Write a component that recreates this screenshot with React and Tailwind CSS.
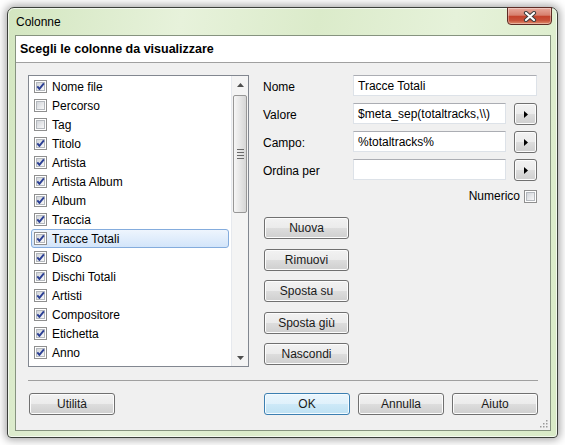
import React from 'react';

// Column list shown in the listbox
const columns = [
  { id: 1, name: 'Nome file', on: true },
  { id: 2, name: 'Percorso', on: false },
  { id: 3, name: 'Tag', on: false },
  { id: 4, name: 'Titolo', on: true },
  { id: 5, name: 'Artista', on: true },
  { id: 6, name: 'Artista Album', on: true },
  { id: 7, name: 'Album', on: true },
  { id: 8, name: 'Traccia', on: true },
  { id: 9, name: 'Tracce Totali', on: true },
  { id: 10, name: 'Disco', on: true },
  { id: 11, name: 'Dischi Totali', on: true },
  { id: 12, name: 'Artisti', on: true },
  { id: 13, name: 'Compositore', on: true },
  { id: 14, name: 'Etichetta', on: true },
  { id: 15, name: 'Anno', on: true },
];

const fields = [
  { label: 'Nome', value: 'Tracce Totali', arrow: false },
  { label: 'Valore', value: '$meta_sep(totaltracks,\\\\)', arrow: true },
  { label: 'Campo:', value: '%totaltracks%', arrow: true },
  { label: 'Ordina per', value: '', arrow: true },
];

const actions = ['Nuova', 'Rimuovi', 'Sposta su', 'Sposta giù', 'Nascondi'];

function CheckBox({ checked }) {
  return (
    <span className="relative flex h-[13px] w-[13px] shrink-0 items-center justify-center border border-[#8f8f8f] bg-white">
      <span className="h-[9px] w-[9px] border border-[#b4b8bd] bg-gradient-to-br from-[#d2d5da] to-[#f8f8f8]" />
      {checked && (
        <svg width="11" height="11" viewBox="0 0 11 11" className="absolute left-0 top-0">
          <path d="M2.3 5.4 L4.4 7.9 L8.9 2.4" fill="none" stroke="#2b3f94" strokeWidth="1.9" strokeLinejoin="round" />
        </svg>
      )}
    </span>
  );
}

function Button({ children, primary = false, className = '' }) {
  return (
    <div
      role="button"
      className={`flex h-[22px] items-center justify-center rounded-[3px] border text-[12px] leading-[14px] text-[#1a1a1a] ${
        primary
          ? 'border-[#3c7fb1] bg-[linear-gradient(#eaf6fd_0%,#dff1fb_50%,#cde9f8_50%,#bfe1f3_100%)] shadow-[inset_0_0_0_1px_#f4fbff]'
          : 'border-[#707070] bg-[linear-gradient(#f2f2f2_0%,#ebebeb_50%,#dddddd_50%,#cfcfcf_100%)] shadow-[inset_0_0_0_1px_#fcfcfc]'
      } ${className}`}
    >
      {children}
    </div>
  );
}

function ArrowButton() {
  return (
    <Button className="w-[23px] shrink-0">
      <svg width="4" height="7" viewBox="0 0 4 7">
        <polygon points="0,0 4,3.5 0,7" fill="#000" />
      </svg>
    </Button>
  );
}

function ScrollBar() {
  return (
    <div className="flex h-full w-[17px] shrink-0 flex-col border-l border-[#e6e9ee] bg-[#f4f4f4]">
      <div className="flex h-[18px] items-center justify-center">
        <svg width="7" height="4" viewBox="0 0 7 4">
          <polygon points="0,4 3.5,0 7,4" fill="#4f4f4f" />
        </svg>
      </div>
      <div className="mx-[1px] mt-[1px] flex h-[118px] flex-col items-center justify-center gap-[2px] rounded-[2px] border border-[#979797] bg-gradient-to-r from-[#f6f6f6] to-[#d6d6d6]">
        <span className="h-px w-[7px] bg-[#6a6a6a]" />
        <span className="h-px w-[7px] bg-[#6a6a6a]" />
        <span className="h-px w-[7px] bg-[#6a6a6a]" />
        <span className="h-px w-[7px] bg-[#6a6a6a]" />
      </div>
      <div className="flex-1" />
      <div className="flex h-[17px] items-center justify-center">
        <svg width="7" height="4" viewBox="0 0 7 4">
          <polygon points="0,0 7,0 3.5,4" fill="#4f4f4f" />
        </svg>
      </div>
    </div>
  );
}

export default function App() {
  return (
    <div className="h-[445px] w-[565px] overflow-hidden bg-white pl-[7px] pt-[7px] font-['Liberation_Sans',Arial,sans-serif]">
      {/* Window frame */}
      <div className="relative flex h-[431px] w-[551px] flex-col rounded-t-[7px] rounded-b-[4px] border border-[#3b3f3a] bg-[linear-gradient(100deg,#d3e6c0_0%,#e7f2db_28%,#dbebca_50%,#e6f2da_72%,#d8eac6_100%)] pb-[6px] pl-[7px] pr-[6px] shadow-[0_0_9px_2px_rgba(0,0,0,0.35),inset_0_0_0_1px_rgba(255,255,255,0.65)]">
        <div className="flex h-[27px] shrink-0 items-center pl-[1px] text-[12px] text-black">Colonne</div>

        {/* Close button */}
        <div className="absolute -top-px right-[5px] flex h-[18px] w-[45px] items-center justify-center rounded-b-[4px] border border-[#5c2b24] bg-[linear-gradient(#e8aa9c_0%,#d7806e_45%,#c4432c_52%,#c8523a_78%,#df8f6f_100%)] shadow-[inset_0_0_0_1px_rgba(255,255,255,0.35)]">
          <svg width="14" height="11" viewBox="0 0 14 11">
            <path d="M3 2 L11 9 M11 2 L3 9" stroke="#3e3e3e" strokeWidth="4.2" strokeLinecap="round" />
            <path d="M3 2 L11 9 M11 2 L3 9" stroke="#ffffff" strokeWidth="2.2" strokeLinecap="round" />
          </svg>
        </div>

        {/* Client area */}
        <div className="relative flex flex-1 flex-col border border-[#86937f] bg-[#f0f0f0]">
          <div className="flex h-[27px] shrink-0 items-center border-b border-[#a0a0a0] bg-white pl-[4px] text-[12.5px] font-bold text-black">
            Scegli le colonne da visualizzare
          </div>

          <div className="flex flex-col px-[12px] pt-[12px]">
            <div className="flex gap-[14px]">
              {/* Column list */}
              <div className="flex h-[292px] w-[221px] shrink-0 border border-[#828790] bg-white">
                <div className="flex flex-1 flex-col pt-px">
                  {columns.map((col) => (
                    <div
                      key={col.id}
                      className={`mx-[2px] flex h-[19px] items-center gap-[5px] rounded-[3px] border pl-[2px] text-[12px] text-black ${
                        col.name === 'Tracce Totali'
                          ? 'border-[#84acdd] bg-gradient-to-b from-[#eef5fd] to-[#d3e5fa]'
                          : 'border-transparent'
                      }`}
                    >
                      <CheckBox checked={col.on} />
                      <span>{col.name}</span>
                    </div>
                  ))}
                </div>
                <ScrollBar />
              </div>

              {/* Column properties */}
              <div className="flex h-[292px] w-[274px] flex-col">
                <div className="flex flex-col gap-[6px]">
                  {fields.map((field) => (
                    <div key={field.label} className="flex h-[22px] items-start">
                      <span className="w-[90px] shrink-0 pt-[5px] text-[12px] leading-[14px] text-black">{field.label}</span>
                      <div className="flex flex-1 items-start gap-[8px]">
                        <div className="flex h-[21px] min-w-0 flex-1 items-center overflow-hidden whitespace-nowrap border border-[#dde2e8] border-t-[#abadb3] bg-white pl-[4px] text-[12px] text-black">
                          {field.value}
                        </div>
                        {field.arrow && <ArrowButton />}
                      </div>
                    </div>
                  ))}
                </div>

                <div className="mt-[9px] flex h-[13px] items-center justify-end gap-[4px] text-[12px] leading-[13px] text-black">
                  <span>Numerico</span>
                  <CheckBox checked={false} />
                </div>

                <div className="mt-[14px] flex flex-col gap-[9.5px] pl-px">
                  {actions.map((label) => (
                    <Button key={label} className="w-[85px]">
                      {label}
                    </Button>
                  ))}
                </div>
              </div>
            </div>

            <div className="mt-[13px] h-px bg-[#a0a0a0]" />

            <div className="mt-[12px] flex items-center">
              <Button className="ml-px w-[86px]">Utilità</Button>
              <div className="ml-auto flex gap-[8px]">
                <Button primary className="w-[86px]">
                  OK
                </Button>
                <Button className="w-[86px]">Annulla</Button>
                <Button className="w-[86px]">Aiuto</Button>
              </div>
            </div>
          </div>

          {/* Resize grip */}
          <svg width="10" height="10" viewBox="0 0 10 10" className="absolute bottom-[2px] right-[2px]">
            {[
              [8, 2],
              [5, 5],
              [8, 5],
              [2, 8],
              [5, 8],
              [8, 8],
            ].map(([x, y]) => (
              <rect key={`${x}-${y}`} x={x} y={y} width="1.5" height="1.5" fill="#9a9a9a" />
            ))}
          </svg>
        </div>
      </div>
    </div>
  );
}
